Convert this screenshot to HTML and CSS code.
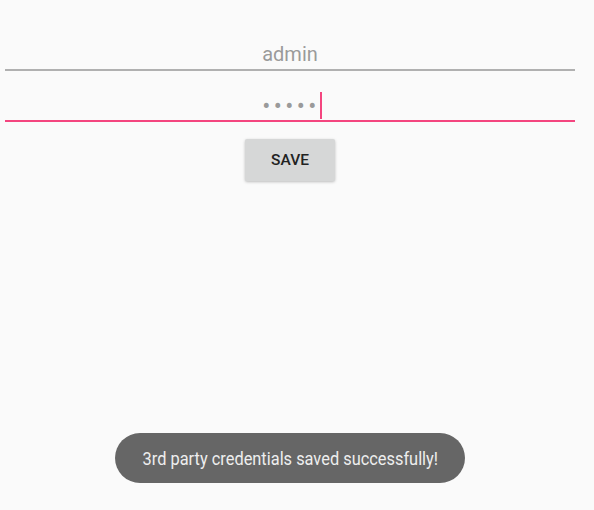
FILE: index.html
```html
<!DOCTYPE html>
<html>
<head>
<meta charset="utf-8">
<link rel="stylesheet" href="styles.css">
</head>
<body>
<div class="form">
  <div class="field">
    <span class="value">admin</span>
  </div>
  <div class="field focused">
    <span class="dots">•••••</span><span class="cursor"></span>
  </div>
  <div class="actions">
    <button class="btn">SAVE</button>
  </div>
</div>
<div class="toast"><span class="toast-text">3rd party credentials saved successfully!</span></div>
</body>
</html>
```

FILE: styles.css
```css
html, body {
  margin: 0;
  padding: 0;
  background: #fafafa;
  height: 100%;
}
body {
  font-family: Roboto, "Noto Sans", sans-serif;
  position: relative;
  overflow: hidden;
}
.form {
  width: 570px;
  margin-left: 5px;
  padding-top: 38px;
}
.field {
  height: 30px;
  border-bottom: 2px solid #b0b0b0;
  display: flex;
  justify-content: center;
  align-items: center;
  padding-bottom: 1px;
}
.field + .field {
  margin-top: 18px;
}
.value {
  font-size: 20px;
  color: #9a9a9a;
  line-height: 30px;
  margin-top: 2px;
}
.field.focused {
  border-bottom-color: #f4457f;
}
.dots {
  font-size: 24px;
  color: #9a9a9a;
  letter-spacing: 3.4px;
  line-height: 30px;
  padding-left: 4px;
  margin-top: 4px;
}
.cursor {
  display: inline-block;
  width: 2px;
  height: 27px;
  background: #f4457f;
  margin-top: 2px;
}
.actions {
  display: flex;
  justify-content: center;
  padding-top: 17px;
}
.btn {
  width: 90px;
  height: 42px;
  border: none;
  border-radius: 2px;
  background: #d6d7d7;
  box-shadow: 0 1px 3px rgba(0,0,0,0.25);
  font-family: Roboto, sans-serif;
  font-weight: 500;
  font-size: 15.5px;
  color: #222;
  padding: 0;
}
.toast {
  position: absolute;
  left: 115px;
  top: 433px;
  width: 350px;
  height: 50px;
  border-radius: 25px;
  background: #666666;
  display: flex;
  justify-content: center;
  align-items: center;
}
.toast-text {
  font-size: 18px;
  color: #eeeeee;
  display: inline-block;
  transform: scaleX(0.91);
  white-space: nowrap;
}
```
